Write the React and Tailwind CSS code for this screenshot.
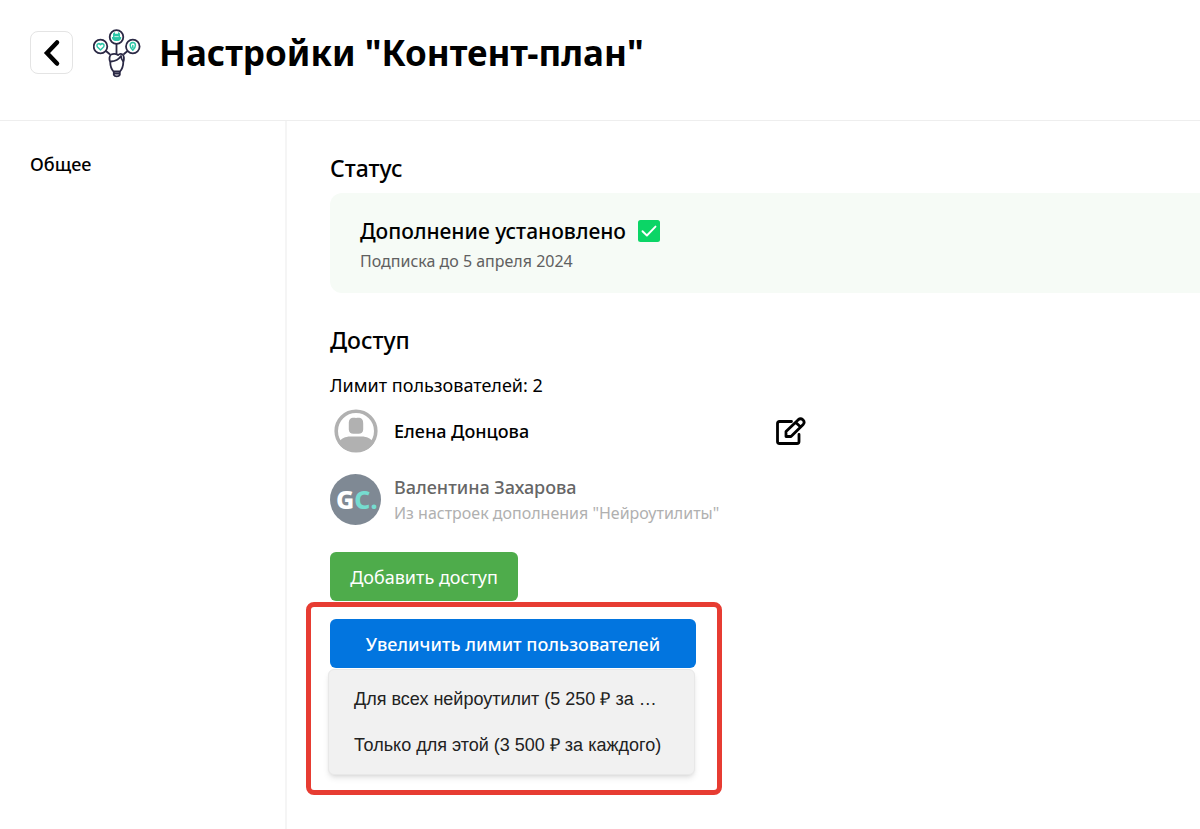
const NeuroLogo = () => (
    <svg viewBox="0 0 48 50" className="w-12 h-[50px] shrink-0" fill="none" stroke="#2b2945" strokeWidth="1.8" strokeLinejoin="round" strokeLinecap="round">
        <circle cx="23.500" cy="9" r="6.800" />
        <circle cx="7.500" cy="18.500" r="6.800" />
        <circle cx="39.800" cy="18.500" r="6.800" />
        <path d="M23.500 15.800V26M13 23L16.500 26M34.500 23L31 26" />
        <path d="M18 26.500c-1.800 2-1.800 5-.8 7.500.1 4 1 7 3.300 9.500h6.500c2.300-2.500 3.200-5.500 3.300-9.500 1-3 1-5.500-.6-7.500-2-1.200-3.500-.6-4.700.6-2-1.300-5-1.300-7-.6z" />
        <path d="M18 33.500c4.800-.3 7.800-2.300 10-5.500.2 2.400.9 4 2 5M20.800 44v2.800c1 2 5 2 6 0V44M20.800 45.500h6" />
        <g fill="#2dc5a8" stroke="none">
            <path d="M19 9h9.200v1.200c-.8 3.800-8.400 3.800-9.200 0zM20 5.500l2-1.500v1.800h3V4l2 1.500V9h-7z" />
        </g>
        <path d="M7.500 22l-3-3c-1.800-2.300 1.200-4.600 3-2.300 1.800-2.300 4.800 0 3 2.300zM39.800 22.300c-3.500-3.600-3.500-7.500 0-7.700 3.500.2 3.500 4.100 0 7.700zM39.800 17.500v2" stroke="#2dc5a8" strokeWidth="1.500" />
        <path d="M21.800 8.600h3.500" stroke="#d5f3ec" strokeWidth="0.9" />
    </svg>
);

const CheckBadge = () => (
    <svg viewBox="0 0 22 22" className="w-[22px] h-[22px] shrink-0" fill="none">
        <rect width="22" height="22" rx="2.500" fill="#0bd566" />
        <path d="M4.500 11.200L8.900 15.500L17.500 6.600" stroke="#fff" strokeWidth="1.900" strokeLinecap="round" strokeLinejoin="round" />
    </svg>
);

const UserAvatar = () => (
    <svg viewBox="0 0 44 44" className="w-11 h-11">
        <circle cx="22" cy="22" r="19.800" fill="#fff" stroke="#b1b1b1" strokeWidth="3.600" />
        <path d="M22 9c-5.200-.8-7.300 1.200-7.200 5.500v6c.2 3 1.800 4.200 4.600 4.200h5.200c2.800 0 4.400-1.200 4.600-4.200v-6c.1-4.300-2-6.300-7.200-5.500z" fill="#b1b1b1" />
        <path d="M4 33.500c3.500-4 7-6 12.500-6h11c5.500 0 9 2 12.500 6C36.500 39.500 30.500 43 22 43S7.500 39.500 4 33.500z" fill="#b1b1b1" />
    </svg>
);

const EditIcon = () => (
    <svg viewBox="0 0 30 28" className="w-[30px] h-7" fill="none" stroke="#000" strokeWidth="2.800" strokeLinecap="round" strokeLinejoin="round">
        <path d="M15.500 4.500H3.500Q1.500 4.500 1.500 6.500V24.500Q1.500 26.500 3.500 26.500H21Q23 26.500 23 24.500V17.500" />
        <path d="M10 19.500V14.500L22.300 2.700Q24.600.8 26.900 2.800Q29.200 5 27.200 7.400L15 19.500zM19.800 5.500L24.600 10" />
    </svg>
);

const options = [
    'Для всех нейроутилит (5 250 ₽ за …',
    'Только для этой (3 500 ₽ за каждого)',
];

const App = () => {
    return (
        <div className="min-h-screen flex flex-col bg-white text-black font-['Noto_Sans','Open_Sans',sans-serif]">
            <header className="flex items-start h-[121px] px-[30px] pt-7 border-b border-[#eeeeee]">
                <button aria-label="Назад" className="mt-[3px] w-[43px] h-[43px] shrink-0 flex items-center justify-center border border-[#e4e4e4] rounded-lg">
                    <svg viewBox="0 0 18 28" className="w-[18px] h-7" fill="none" stroke="#000" strokeWidth="4.500" strokeLinecap="round">
                        <path d="M14 3.500L4 14L14 24.500" />
                    </svg>
                </button>
                <div className="ml-5 mr-[18px]">
                    <NeuroLogo />
                </div>
                <h1 className="text-[35px] leading-[50px] font-bold whitespace-nowrap">Настройки "Контент-план"</h1>
            </header>

            <div className="flex flex-1">
                <aside className="w-[287px] shrink-0 border-r-2 border-[#f5f5f5] px-[30px] pt-[30px]">
                    <a href="#general" className="text-[18px] leading-[26px] font-medium">Общее</a>
                </aside>

                <main className="flex-1 min-w-0 pl-[43px]">
                    {/* СТАТУС */}
                    <section className="pt-8">
                        <h2 className="text-[23px] leading-[30px] font-medium">Статус</h2>
                        <div className="mt-2.5 h-[100px] pl-[30px] pt-[22px] bg-[#f6fbf6] rounded-l-xl">
                            <div className="flex items-center gap-3">
                                <span className="text-[21px] leading-8 font-medium">Дополнение установлено</span>
                                <CheckBadge />
                            </div>
                            <p className="text-[16px] leading-7 text-[#606060]">Подписка до 5 апреля 2024</p>
                        </div>
                    </section>

                    {/* ДОСТУП */}
                    <section className="pt-8">
                        <h2 className="text-[23px] leading-[30px] font-medium">Доступ</h2>
                        <p className="mt-[18px] text-[18px] leading-6">Лимит пользователей: 2</p>

                        <div className="mt-3 flex items-center w-[476px]">
                            <div className="w-[51px] flex justify-center"><UserAvatar /></div>
                            <span className="ml-[13px] text-[18px] leading-[26px] font-medium">Елена Донцова</span>
                            <button aria-label="Редактировать" className="ml-auto"><EditIcon /></button>
                        </div>

                        <div className="mt-[21px] flex items-start">
                            <svg viewBox="0 0 51 51" className="w-[51px] h-[51px]">
                                <circle cx="25.500" cy="25.500" r="25.500" fill="#7f8994" />
                                <text x="6" y="35" fill="#fff" className="text-[25px] font-extrabold">G<tspan fill="#76dcd0">C.</tspan></text>
                            </svg>
                            <div className="ml-[13px]">
                                <p className="text-[18px] leading-[26px] font-medium text-[#666666]">Валентина Захарова</p>
                                <p className="text-[16px] leading-[26px] text-[#b0b0b0]">Из настроек дополнения "Нейроутилиты"</p>
                            </div>
                        </div>

                        <button className="mt-[26px] h-[49px] w-[188px] block bg-[#4eac4b] text-white text-[18px] leading-6 rounded-md">
                            Добавить доступ
                        </button>

                        {/* ЛИМИТ ПОЛЬЗОВАТЕЛЕЙ */}
                        <div className="-ml-6 mt-px mb-8 w-[416px] border-[5px] border-[#e73c32] rounded-lg pt-3 pb-[15px] pl-[17px]">
                            <button className="ml-0.5 w-[366px] h-[49px] bg-[#0275df] text-white text-[18px] leading-6 font-medium rounded-md block">
                                Увеличить лимит пользователей
                            </button>
                            <ul className="mt-px w-[367px] py-[6px] bg-[#f1f1f1] border border-[#e8e8e8] rounded-md shadow-md font-['Liberation_Sans',sans-serif]">
                                {options.map((label) => (
                                    <li key={label}>
                                        <button className="w-full h-[46px] pl-[25px] text-left text-[18px] leading-6 text-[#222222] whitespace-nowrap">{label}</button>
                                    </li>
                                ))}
                            </ul>
                        </div>
                    </section>
                </main>
            </div>
        </div>
    );
};

export default App;
